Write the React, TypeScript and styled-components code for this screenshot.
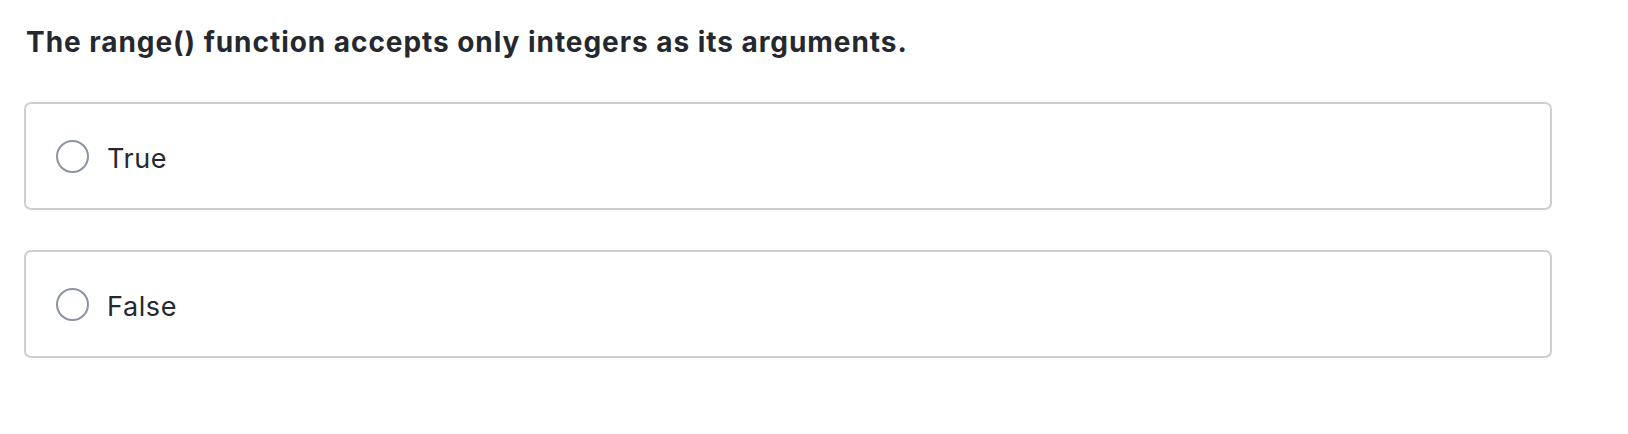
import React from "react";
import styled, { createGlobalStyle } from "styled-components";

const GlobalStyle = createGlobalStyle`
  html, body {
    margin: 0;
    padding: 0;
    background: #ffffff;
  }
  body {
    font-family: Inter, "Noto Sans", "Liberation Sans", sans-serif;
    color: #25292f;
  }
`;

const Page = styled.main`
  padding: 26px 76px 40px 24px;
  display: flex;
  flex-direction: column;
`;

const Question = styled.h2`
  margin: 0 0 43px 2px;
  font-size: 28px;
  line-height: 33px;
  font-weight: 700;
  letter-spacing: 0.95px;
  color: #25292f;
`;

const Options = styled.div`
  display: flex;
  flex-direction: column;
  gap: 40px;
`;

const Option = styled.label`
  display: flex;
  align-items: center;
  gap: 18px;
  height: 108px;
  box-sizing: border-box;
  padding: 0 30px;
  border: 2px solid #cfcfcf;
  border-radius: 7px;
  background: #fff;
  cursor: pointer;
`;

const Radio = styled.span`
  width: 33px;
  height: 33px;
  box-sizing: border-box;
  border: 2px solid #8c94a2;
  border-radius: 50%;
  flex-shrink: 0;
`;

const OptionText = styled.span`
  padding-top: 4px;
  font-size: 27px;
  line-height: 33px;
  letter-spacing: 0.6px;
  color: #25292f;
`;

const options = ["True", "False"];

export default function App() {
  return (
    <>
      <GlobalStyle />
      <Page>
        <Question>The range() function accepts only integers as its arguments.</Question>
        <Options>
          {options.map((o) => (
            <Option key={o}>
              <Radio />
              <OptionText>{o}</OptionText>
            </Option>
          ))}
        </Options>
      </Page>
    </>
  );
}
